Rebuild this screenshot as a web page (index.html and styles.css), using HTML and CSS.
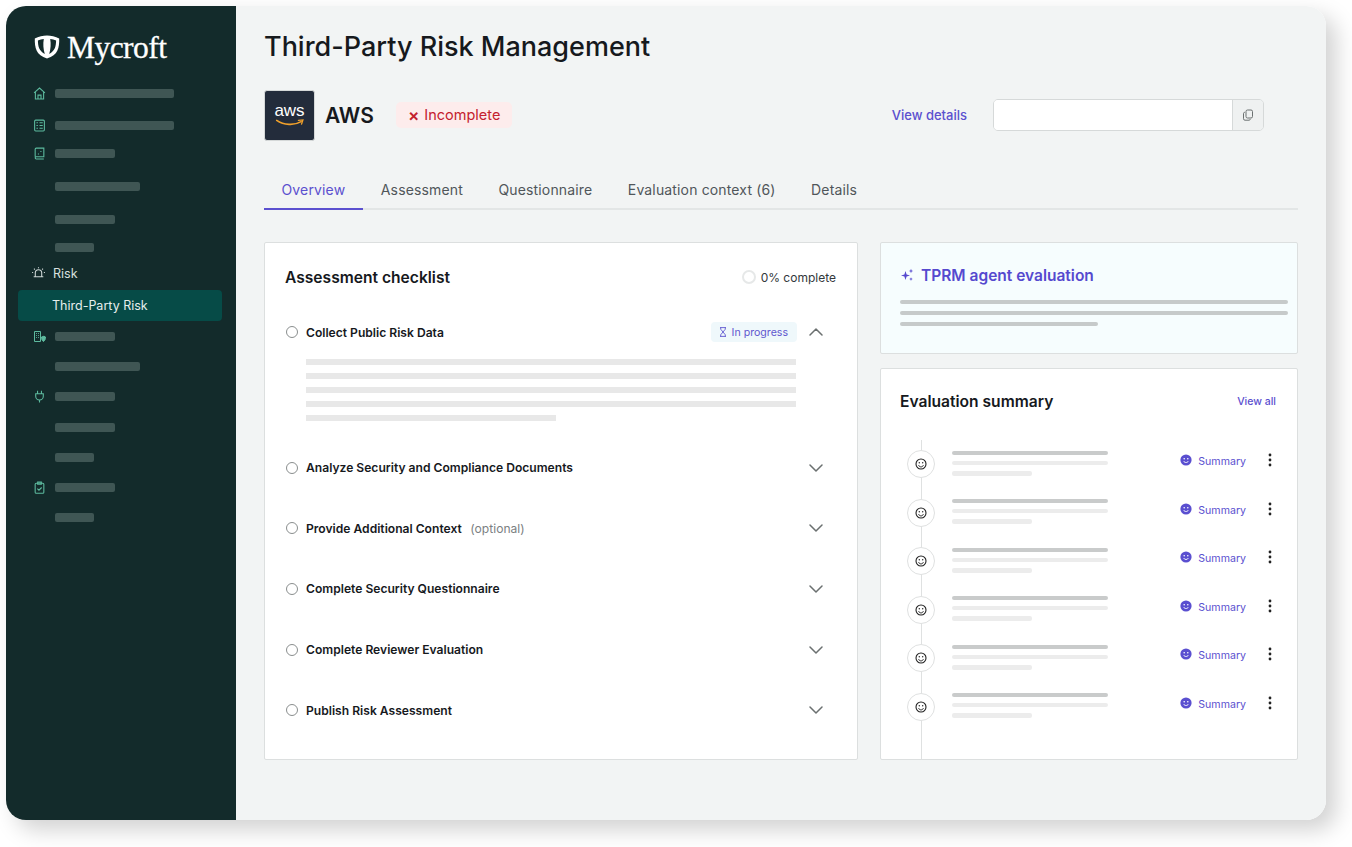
FILE: index.html
```html
<!DOCTYPE html>
<html lang="en">
<head>
    <meta charset="UTF-8">
    <meta name="viewport" content="width=device-width, initial-scale=1.0">
    <title>Mycroft - Third-Party Risk Management</title>
    <link rel="stylesheet" href="styles.css">
</head>
<body>
    <svg class="icon-defs" aria-hidden="true">
        <symbol id="chevron" viewBox="0 0 14 8"><path d="M1 1l6 6 6-6" fill="none" stroke="#6b7070" stroke-width="1.5" stroke-linecap="round" stroke-linejoin="round"/></symbol>
        <symbol id="smile" viewBox="0 0 14 14"><circle cx="7" cy="7" r="5" fill="none" stroke="#222" stroke-width="1.1"/><circle cx="5.3" cy="5.8" r=".7" fill="#222"/><circle cx="8.7" cy="5.8" r=".7" fill="#222"/><path d="M4.6 8.2c.6 1.2 1.4 1.7 2.4 1.7s1.8-.5 2.4-1.7" fill="none" stroke="#222" stroke-width="1"/></symbol>
        <symbol id="smile-fill" viewBox="0 0 12 12"><circle cx="6" cy="6" r="5.6" fill="#5a4fd0"/><circle cx="4.2" cy="4.8" r=".8" fill="#fff"/><circle cx="7.8" cy="4.8" r=".8" fill="#fff"/><path d="M3.6 7c.5 1 1.4 1.5 2.4 1.5S7.900 8 8.400 7" fill="none" stroke="#fff" stroke-width=".9"/></symbol>
        <symbol id="kebab" viewBox="0 0 4 14"><circle cx="2" cy="2" r="1.4" fill="#222"/><circle cx="2" cy="7" r="1.4" fill="#222"/><circle cx="2" cy="12" r="1.4" fill="#222"/></symbol>
    </svg>

    <div class="window">
        <aside class="sidebar">
            <div class="brand">
                <svg class="brand-mark" viewBox="0 0 26 24" width="26" height="24">
                    <path d="M13 .5C9 .5 4.500 1.500 .8 3.400c-.2 9.200 1.300 16.600 12.200 20.100C23.900 20 25.400 12.600 25.200 3.400 21.500 1.500 17 .5 13 .5z" fill="#fff"/>
                    <path d="M9.800 3.900C7.700 4.100 5.800 4.600 3.900 5.400c.1 5.800 1 10 6.900 13.600C9.300 14 8.900 9 9.800 3.900zM16.200 3.900c2.100.2 4 .7 5.900 1.500-.1 5.800-1 10-6.900 13.600 1.500-5 1.900-10 1-15.100z" fill="#132b2b"/>
                </svg>
                <span class="brand-name">Mycroft</span>
            </div>

            <nav class="nav">
                <div class="nav-row">
                    <svg class="nav-icon" viewBox="0 0 12 12"><path d="M1 5.500L6 1l5 4.500M2.200 4.600V11h7.600V4.600M4.600 11V7.500h2.800V11"/></svg>
                    <span class="nav-bar bar-long"></span>
                </div>
                <div class="nav-row nudge-down">
                    <svg class="nav-icon" viewBox="0 0 12 12"><rect x="1.500" y="1" width="9" height="10" rx="1"/><path d="M3.200 3.500h1.300M3.200 6h1.300M3.200 8.500h1.300M6 3.500h3M6 6h3M6 8.500h3"/></svg>
                    <span class="nav-bar bar-long"></span>
                </div>
                <div class="nav-row nudge-up">
                    <svg class="nav-icon" viewBox="0 0 12 12"><path d="M2 9V2a1 1 0 0 1 1-1h7v8H3a1 1 0 0 0 0 2h7"/><path d="M6.800 4.200h1M4.500 6.500h1"/></svg>
                    <span class="nav-bar bar-short"></span>
                </div>
                <div class="nav-row nudge-down"><span class="nav-bar nav-sub bar-mid"></span></div>
                <div class="nav-row nudge-down-more"><span class="nav-bar nav-sub bar-short"></span></div>
                <div class="nav-row nudge-up"><span class="nav-bar nav-sub bar-tiny"></span></div>
                <div class="nav-row nudge-up-more">
                    <svg class="nav-icon risk-icon" viewBox="0 0 14 12"><path d="M4 9V6a3 3 0 0 1 6 0v3M2.500 9.500h9M7 .6v1M2.800 2l.8.8M11.200 2l-.8.8M1 5.500h1M12 5.500h1"/></svg>
                    <span class="nav-label">Risk</span>
                </div>
                <div class="nav-row nav-active">Third-Party Risk</div>
                <div class="nav-row">
                    <svg class="nav-icon" viewBox="0 0 13 12"><path d="M1.500 11V1h6v10zM3.200 3h.8M5 3h.8M3.200 5h.8M5 5h.8M3.200 7h.8M5 7h.8"/><path d="M8.500 6.500l2.500-.8 1.500.8c0 2.300-.6 3.500-2 4.500-1.400-.8-2-2.200-2-4.500z" fill="#5dbb9f"/></svg>
                    <span class="nav-bar bar-short"></span>
                </div>
                <div class="nav-row"><span class="nav-bar nav-sub bar-mid"></span></div>
                <div class="nav-row">
                    <svg class="nav-icon" viewBox="0 0 12 12"><path d="M4.200.8v2.700M7.800.8v2.700M2.500 3.500h7v2.200a3.500 3.500 0 0 1-7 0zM6 9.200v2.300"/></svg>
                    <span class="nav-bar bar-short"></span>
                </div>
                <div class="nav-row nudge-one"><span class="nav-bar nav-sub bar-short"></span></div>
                <div class="nav-row"><span class="nav-bar nav-sub bar-tiny"></span></div>
                <div class="nav-row">
                    <svg class="nav-icon" viewBox="0 0 12 12"><rect x="2" y="2" width="8" height="9.300" rx="1"/><path d="M4.300 1h3.400v2H4.300zM4 7l1.500 1.500L8 6"/></svg>
                    <span class="nav-bar bar-short"></span>
                </div>
                <div class="nav-row"><span class="nav-bar nav-sub bar-tiny"></span></div>
            </nav>
        </aside>

        <main class="main">
            <h1 class="page-title">Third-Party Risk Management</h1>

            <div class="vendor-row">
                <div class="vendor-logo">
                    <span class="aws-word">aws</span>
                    <svg class="aws-smile" viewBox="0 0 32 9" width="30" height="8">
                        <path d="M1 1.500C9 7 21 7.500 28.500 3" fill="none" stroke="#f0a02b" stroke-width="1.800" stroke-linecap="round"/>
                        <path d="M25.500 1.500l5-.5-1.500 4.800" fill="none" stroke="#f0a02b" stroke-width="1.500" stroke-linecap="round"/>
                    </svg>
                </div>
                <span class="vendor-name">AWS</span>
                <span class="status-badge"><span class="status-x">×</span>Incomplete</span>
                <a href="#" class="view-details">View details</a>
                <div class="copy-field">
                    <div class="copy-input"></div>
                    <div class="copy-button">
                        <svg viewBox="0 0 12 12" width="12" height="12" fill="none" stroke="#6b7070" stroke-width="1"><rect x="4" y="1" width="6.500" height="8" rx="1.500"/><path d="M2.800 3.200A1.500 1.500 0 0 0 1.500 4.700v5A1.500 1.500 0 0 0 3 11.200h4a1.500 1.500 0 0 0 1.400-1"/></svg>
                    </div>
                </div>
            </div>

            <div class="tabs">
                <a href="#" class="tab tab-active">Overview</a>
                <a href="#" class="tab">Assessment</a>
                <a href="#" class="tab">Questionnaire</a>
                <a href="#" class="tab">Evaluation context (6)</a>
                <a href="#" class="tab">Details</a>
            </div>

            <div class="columns">
                <section class="card checklist">
                    <div class="card-head">
                        <h2 class="card-title">Assessment checklist</h2>
                        <span class="progress"><span class="progress-ring"></span>0% complete</span>
                    </div>

                    <div class="check-item check-open">
                        <div class="check-head">
                            <span class="check-dot"></span>
                            <span class="check-label">Collect Public Risk Data</span>
                            <span class="chip">
                                <svg viewBox="0 0 8 10" width="8" height="10" fill="none" stroke="#5f57cf" stroke-width=".9"><path d="M1 .6h6M1 9.400h6M1.700 .6v1.600L6.300 7.800v1.600M6.300 .6v1.600L1.700 7.800v1.600"/></svg>
                                In progress
                            </span>
                            <svg class="chevron chevron-up" width="14" height="8"><use href="#chevron"/></svg>
                        </div>
                        <div class="check-body">
                            <span class="line"></span>
                            <span class="line"></span>
                            <span class="line"></span>
                            <span class="line"></span>
                            <span class="line line-end"></span>
                        </div>
                    </div>
                    <div class="check-item">
                        <div class="check-head">
                            <span class="check-dot"></span>
                            <span class="check-label">Analyze Security and Compliance Documents</span>
                            <svg class="chevron" width="14" height="8"><use href="#chevron"/></svg>
                        </div>
                    </div>
                    <div class="check-item">
                        <div class="check-head">
                            <span class="check-dot"></span>
                            <span class="check-label">Provide Additional Context <span class="check-note">(optional)</span></span>
                            <svg class="chevron" width="14" height="8"><use href="#chevron"/></svg>
                        </div>
                    </div>
                    <div class="check-item">
                        <div class="check-head">
                            <span class="check-dot"></span>
                            <span class="check-label">Complete Security Questionnaire</span>
                            <svg class="chevron" width="14" height="8"><use href="#chevron"/></svg>
                        </div>
                    </div>
                    <div class="check-item">
                        <div class="check-head">
                            <span class="check-dot"></span>
                            <span class="check-label">Complete Reviewer Evaluation</span>
                            <svg class="chevron" width="14" height="8"><use href="#chevron"/></svg>
                        </div>
                    </div>
                    <div class="check-item">
                        <div class="check-head">
                            <span class="check-dot"></span>
                            <span class="check-label">Publish Risk Assessment</span>
                            <svg class="chevron" width="14" height="8"><use href="#chevron"/></svg>
                        </div>
                    </div>
                </section>

                <div class="side-column">
                    <section class="card agent-card">
                        <h2 class="agent-title">
                            <svg viewBox="0 0 14 14" width="14" height="14" fill="#5549cf"><path d="M5.500 3l1.100 3.400L10 7.500 6.600 8.600 5.500 12 4.400 8.600 1 7.500l3.400-1.100zM11 .8l.6 1.600 1.600.6-1.600.6-.6 1.600-.6-1.600L8.800 3l1.600-.6zM11 9.300l.5 1.300 1.300.5-1.300.5-.5 1.300-.5-1.300-1.300-.5 1.300-.5z"/></svg>
                            TPRM agent evaluation
                        </h2>
                        <div class="agent-lines">
                            <span class="pill"></span>
                            <span class="pill"></span>
                            <span class="pill pill-end"></span>
                        </div>
                    </section>

                    <section class="card summary-card">
                        <div class="summary-head">
                            <h2 class="summary-title">Evaluation summary</h2>
                            <a href="#" class="view-all">View all</a>
                        </div>
                        <div class="timeline">
                            <div class="event">
                                <span class="event-face"><svg width="14" height="14"><use href="#smile"/></svg></span>
                                <div class="event-lines"><span class="ev-dark"></span><span class="ev-light"></span><span class="ev-short"></span></div>
                                <span class="event-link"><svg width="12" height="12"><use href="#smile-fill"/></svg>Summary</span>
                                <svg class="kebab" width="4" height="14"><use href="#kebab"/></svg>
                            </div>
                            <div class="event">
                                <span class="event-face"><svg width="14" height="14"><use href="#smile"/></svg></span>
                                <div class="event-lines"><span class="ev-dark"></span><span class="ev-light"></span><span class="ev-short"></span></div>
                                <span class="event-link"><svg width="12" height="12"><use href="#smile-fill"/></svg>Summary</span>
                                <svg class="kebab" width="4" height="14"><use href="#kebab"/></svg>
                            </div>
                            <div class="event">
                                <span class="event-face"><svg width="14" height="14"><use href="#smile"/></svg></span>
                                <div class="event-lines"><span class="ev-dark"></span><span class="ev-light"></span><span class="ev-short"></span></div>
                                <span class="event-link"><svg width="12" height="12"><use href="#smile-fill"/></svg>Summary</span>
                                <svg class="kebab" width="4" height="14"><use href="#kebab"/></svg>
                            </div>
                            <div class="event">
                                <span class="event-face"><svg width="14" height="14"><use href="#smile"/></svg></span>
                                <div class="event-lines"><span class="ev-dark"></span><span class="ev-light"></span><span class="ev-short"></span></div>
                                <span class="event-link"><svg width="12" height="12"><use href="#smile-fill"/></svg>Summary</span>
                                <svg class="kebab" width="4" height="14"><use href="#kebab"/></svg>
                            </div>
                            <div class="event">
                                <span class="event-face"><svg width="14" height="14"><use href="#smile"/></svg></span>
                                <div class="event-lines"><span class="ev-dark"></span><span class="ev-light"></span><span class="ev-short"></span></div>
                                <span class="event-link"><svg width="12" height="12"><use href="#smile-fill"/></svg>Summary</span>
                                <svg class="kebab" width="4" height="14"><use href="#kebab"/></svg>
                            </div>
                            <div class="event">
                                <span class="event-face"><svg width="14" height="14"><use href="#smile"/></svg></span>
                                <div class="event-lines"><span class="ev-dark"></span><span class="ev-light"></span><span class="ev-short"></span></div>
                                <span class="event-link"><svg width="12" height="12"><use href="#smile-fill"/></svg>Summary</span>
                                <svg class="kebab" width="4" height="14"><use href="#kebab"/></svg>
                            </div>
                        </div>
                    </section>
                </div>
            </div>
        </main>
    </div>
</body>
</html>
```

FILE: styles.css
```css
:root {
    --sidebar: #132b2b;
    --sidebar-bar: #3f5654;
    --sidebar-active: #064b47;
    --nav-icon: #5dbb9f;
    --page: #f2f4f4;
    --border: #dcdfdf;
    --ink: #16191d;
    --violet: #5b50cf;
}

* {
    box-sizing: border-box;
}

html, body {
    height: 100%;
}

body {
    margin: 0;
    padding: 6px 26px 27px 6px;
    background: #fff;
    font-family: Inter, "Liberation Sans", sans-serif;
    color: var(--ink);
    overflow: hidden;
}

a {
    text-decoration: none;
}

.icon-defs {
    display: none;
}

.window {
    display: flex;
    height: 814px;
    border-radius: 20px;
    overflow: hidden;
    box-shadow: 10px 10px 22px rgba(0, 0, 0, 0.18);
}

/* Sidebar */
.sidebar {
    width: 230px;
    flex-shrink: 0;
    background: var(--sidebar);
    padding: 27px 14px 0 12px;
}

.brand {
    display: flex;
    align-items: center;
    gap: 7px;
    height: 30px;
    padding-left: 16px;
}

.brand-mark {
    margin-top: -3px;
}

.brand-name {
    font-family: "Liberation Serif", serif;
    font-size: 31.500px;
    letter-spacing: -0.55px;
    color: #fff;
    -webkit-text-stroke: 0.3px #fff;
}

.nav {
    margin-top: 15px;
}

.nav-row {
    display: flex;
    align-items: center;
    height: 30px;
    position: relative;
    padding-left: 37px;
}

.nudge-down { margin-top: 2.5px; }
.nudge-down-more { margin-top: 3.5px; }
.nudge-one { margin-top: 1px; }
.nudge-up { margin-top: -2px; }
.nudge-up-more { margin-top: -4.5px; }

.nav-icon {
    position: absolute;
    left: 15px;
    width: 13px;
    height: 13px;
    fill: none;
    stroke: var(--nav-icon);
    stroke-width: 1;
}

.risk-icon {
    left: 13px;
    width: 15px;
    height: 14px;
    stroke: #cfd8d7;
}

.nav-bar {
    display: block;
    height: 9px;
    border-radius: 2px;
    background: var(--sidebar-bar);
}

.bar-long { width: 119px; }
.bar-mid { width: 85px; }
.bar-short { width: 60px; }
.bar-tiny { width: 39px; }

.nav-label {
    font-size: 12.5px;
    color: #d8e0df;
    margin-left: -2px;
}

.nav-active {
    height: 31px;
    margin: 1.5px 0 1px;
    padding-left: 34px;
    border-radius: 4px;
    background: var(--sidebar-active);
    font-size: 12.5px;
    color: #e6eeed;
}

/* Main area */
.main {
    flex: 1;
    background: var(--page);
    padding: 24px 28px 0;
}

.page-title {
    margin: 0;
    font-size: 27px;
    line-height: 34px;
    font-weight: 500;
}

.vendor-row {
    display: flex;
    align-items: center;
    margin-top: 26px;
    padding-right: 34px;
}

.vendor-logo {
    width: 51px;
    height: 51px;
    border-radius: 3px;
    background: #232c3b;
    border: 1px solid #d5d8d8;
    display: flex;
    flex-direction: column;
    align-items: center;
    justify-content: center;
}

.aws-word {
    font-family: "Liberation Sans", sans-serif;
    font-size: 17px;
    line-height: 14px;
    color: #fff;
}

.aws-smile {
    margin-top: 1px;
}

.vendor-name {
    margin-left: 10px;
    margin-top: -1px;
    font-size: 21px;
    font-weight: 600;
}

.status-badge {
    display: flex;
    align-items: center;
    height: 26px;
    margin-left: 22px;
    margin-top: -2px;
    padding: 0 12px;
    border-radius: 5px;
    background: #fdecec;
    font-size: 14.500px;
    color: #c4202e;
}

.status-x {
    font-size: 17px;
    font-weight: 600;
    margin-right: 5px;
}

.view-details {
    margin-left: auto;
    margin-top: -1px;
    font-size: 13px;
    font-weight: 500;
    color: var(--violet);
}

.copy-field {
    display: flex;
    width: 271px;
    height: 32px;
    margin-left: 26px;
    margin-top: -1px;
    border: 1px solid #d6d9d9;
    border-radius: 5px;
    overflow: hidden;
}

.copy-input {
    flex: 1;
    background: #fff;
}

.copy-button {
    width: 31px;
    display: flex;
    align-items: center;
    justify-content: center;
    border-left: 1px solid #d6d9d9;
    background: #eff1f1;
}

.tabs {
    display: flex;
    margin-top: 29px;
    border-bottom: 2px solid #e3e6e6;
}

.tab {
    display: block;
    height: 40px;
    margin-bottom: -2px;
    padding: 11px 18px 0 17.500px;
    font-size: 14px;
    line-height: 17px;
    letter-spacing: 0.15px;
    color: #50565a;
}

.tab-active {
    color: var(--violet);
    border-bottom: 2px solid var(--violet);
}

.columns {
    display: flex;
    gap: 22px;
    margin-top: 32px;
}

.card {
    background: #fff;
    border: 1px solid var(--border);
    border-radius: 2px;
}

/* Checklist */
.checklist {
    width: 594px;
    height: 518px;
    padding: 19px 21px 0 20px;
}

.card-head {
    display: flex;
    align-items: center;
    justify-content: space-between;
    height: 30px;
    margin-bottom: 30px;
}

.card-title {
    margin: 0;
    font-size: 15.600px;
    font-weight: 600;
}

.progress {
    display: flex;
    align-items: center;
    gap: 5px;
    font-size: 12px;
    color: #33383b;
}

.progress-ring {
    width: 14px;
    height: 14px;
    border: 2px solid #e6e8e8;
    border-radius: 50%;
}

.check-item {
    padding-bottom: 40.6px;
}

.check-open {
    padding-bottom: 36.8px;
}

.check-head {
    display: flex;
    align-items: center;
    height: 20px;
}

.check-dot {
    width: 12px;
    height: 12px;
    flex-shrink: 0;
    border: 1.3px solid #8a8e8e;
    border-radius: 50%;
    margin: 0 8px 0 1px;
}

.check-label {
    font-size: 12.100px;
    font-weight: 600;
    margin-right: auto;
}

.check-note {
    margin-left: 5.500px;
    font-weight: 400;
    color: #7b8082;
}

.chip {
    display: flex;
    align-items: center;
    gap: 5px;
    height: 20px;
    margin-right: -1px;
    padding: 0 9px 0 8px;
    border-radius: 4px;
    background: #eff8fb;
    font-size: 10.600px;
    color: #5f57cf;
}

.chevron {
    margin: 0 13px;
}

.chevron-up {
    transform: rotate(180deg);
}

.check-body {
    display: flex;
    flex-direction: column;
    gap: 8px;
    margin: 17px 40px 0 21px;
}

.line {
    display: block;
    height: 6px;
    background: #e8e8e8;
}

.line-end {
    width: 250px;
}

/* Right column */
.side-column {
    flex: 1;
    display: flex;
    flex-direction: column;
    gap: 14px;
}

.agent-card {
    height: 112px;
    padding: 22px 9px 0 19px;
    background: #f6fdfe;
}

.agent-title {
    display: flex;
    align-items: center;
    gap: 7px;
    margin: 0;
    height: 20px;
    font-size: 15.500px;
    font-weight: 600;
    color: #5549cf;
}

.agent-lines {
    display: flex;
    flex-direction: column;
    gap: 7px;
    margin-top: 15px;
}

.pill {
    display: block;
    height: 4px;
    border-radius: 2px;
    background: #c6caca;
}

.pill-end {
    width: 198px;
}

.summary-card {
    height: 392px;
    padding: 0 21px 0 19px;
    display: flex;
    flex-direction: column;
}

.summary-head {
    display: flex;
    align-items: center;
    justify-content: space-between;
    height: 64px;
    margin-bottom: 7px;
}

.summary-title {
    margin: 0;
    font-size: 15.600px;
    font-weight: 600;
}

.view-all {
    font-size: 10.500px;
    font-weight: 500;
    color: var(--violet);
}

.timeline {
    flex: 1;
    position: relative;
}

.timeline::before {
    content: "";
    position: absolute;
    left: 20.5px;
    top: 0;
    bottom: 0;
    width: 1px;
    background: #dfe1e1;
}

.event {
    display: flex;
    align-items: center;
    height: 48.500px;
    position: relative;
}

.event-face {
    display: flex;
    align-items: center;
    justify-content: center;
    width: 28px;
    height: 28px;
    margin-left: 7px;
    border: 1px solid #dfe1e1;
    border-radius: 50%;
    background: #fff;
}

.event-lines {
    display: flex;
    flex-direction: column;
    gap: 6px;
    width: 156px;
    margin-left: 17px;
    margin-top: -2px;
}

.event-lines span {
    display: block;
    height: 4px;
    border-radius: 2px;
}

.ev-dark { background: #c9cbcb; }
.ev-light { background: #ececec; }
.event-lines .ev-short {
    width: 80px;
    height: 5px;
    background: #ececec;
}

.event-link {
    display: flex;
    align-items: center;
    gap: 6px;
    margin-left: auto;
    margin-right: 22px;
    margin-top: -5px;
    font-size: 10.600px;
    color: var(--violet);
}

.event-link svg {
    margin-top: -3px;
}

.kebab {
    margin-right: 4px;
    margin-top: -8px;
}
```
